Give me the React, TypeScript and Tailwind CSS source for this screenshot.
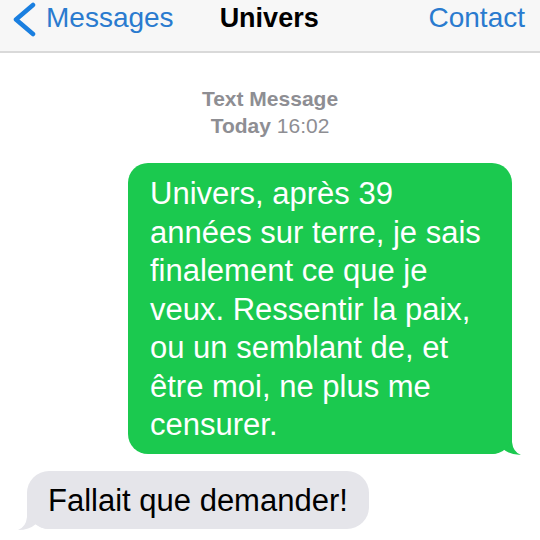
import React from "react";

function Tail({ color, flip }: { color: string; flip?: boolean }) {
  return (
    <svg
      width="32"
      height="24"
      viewBox="0 0 32 24"
      className={
        flip
          ? "absolute bottom-[-2px] left-[-10px] -scale-x-100"
          : "absolute bottom-[-2px] right-[-10px]"
      }
    >
      <path
        d="M22 0 L22 10 Q23 20 31 23 Q20 23 13 17 Q8 22 0 22 L0 0 Z"
        fill={color}
      />
    </svg>
  );
}

export default function App() {
  return (
    <div
      className="w-[540px] h-[540px] bg-white overflow-hidden"
      style={{ fontFamily: '"Liberation Sans", Arial, sans-serif' }}
    >
      {/* barre de navigation */}
      <div className="h-[53px] bg-[#f7f7f7] border-b-2 border-[#d9d9d9] flex items-start pt-[2px]">
        <svg width="46" height="36" viewBox="0 0 46 36" className="shrink-0">
          <polyline
            points="33,3 16,17.5 33,32"
            fill="none"
            stroke="#1a7fe0"
            strokeWidth="4.5"
            strokeLinecap="round"
            strokeLinejoin="round"
          />
        </svg>
        <span className="text-[28px] leading-[32px] text-[#2a7bcf]">Messages</span>
        <span className="ml-[46px] text-[27px] leading-[32px] font-bold text-black">
          Univers
        </span>
        <span className="ml-auto mr-[15px] text-[28px] leading-[32px] text-[#2a7bcf]">
          Contact
        </span>
      </div>

      {/* horodatage */}
      <div className="mt-[32px] flex flex-col items-center text-[21px] leading-[27px] text-[#8e8e93]">
        <span className="font-bold">Text Message</span>
        <span>
          <span className="font-bold">Today</span> 16:02
        </span>
      </div>

      {/* messages */}
      <div className="mt-[24px] px-[28px] flex flex-col gap-[17px]">
        <div className="self-end relative">
          <div className="relative z-10 bg-[#1bc94f] rounded-[20px] pl-[22px] pr-[20px] pt-[12px] pb-[9px]">
            <p className="w-[342px] text-white text-[31px] leading-[38.5px]">
              Univers, après 39 années sur terre, je sais finalement ce que je
              veux. Ressentir la paix, ou un semblant de, et être moi, ne plus
              me censurer.
            </p>
          </div>
          <Tail color="#1bc94f" />
        </div>

        <div className="self-start relative ml-[-1px]">
          <div className="relative z-10 bg-[#e5e5ea] rounded-[22px] px-[21px] pt-[11px] pb-[9px]">
            <p className="text-black text-[31px] leading-[38.5px]">
              Fallait que demander!
            </p>
          </div>
          <Tail color="#e5e5ea" flip />
        </div>
      </div>
    </div>
  );
}
